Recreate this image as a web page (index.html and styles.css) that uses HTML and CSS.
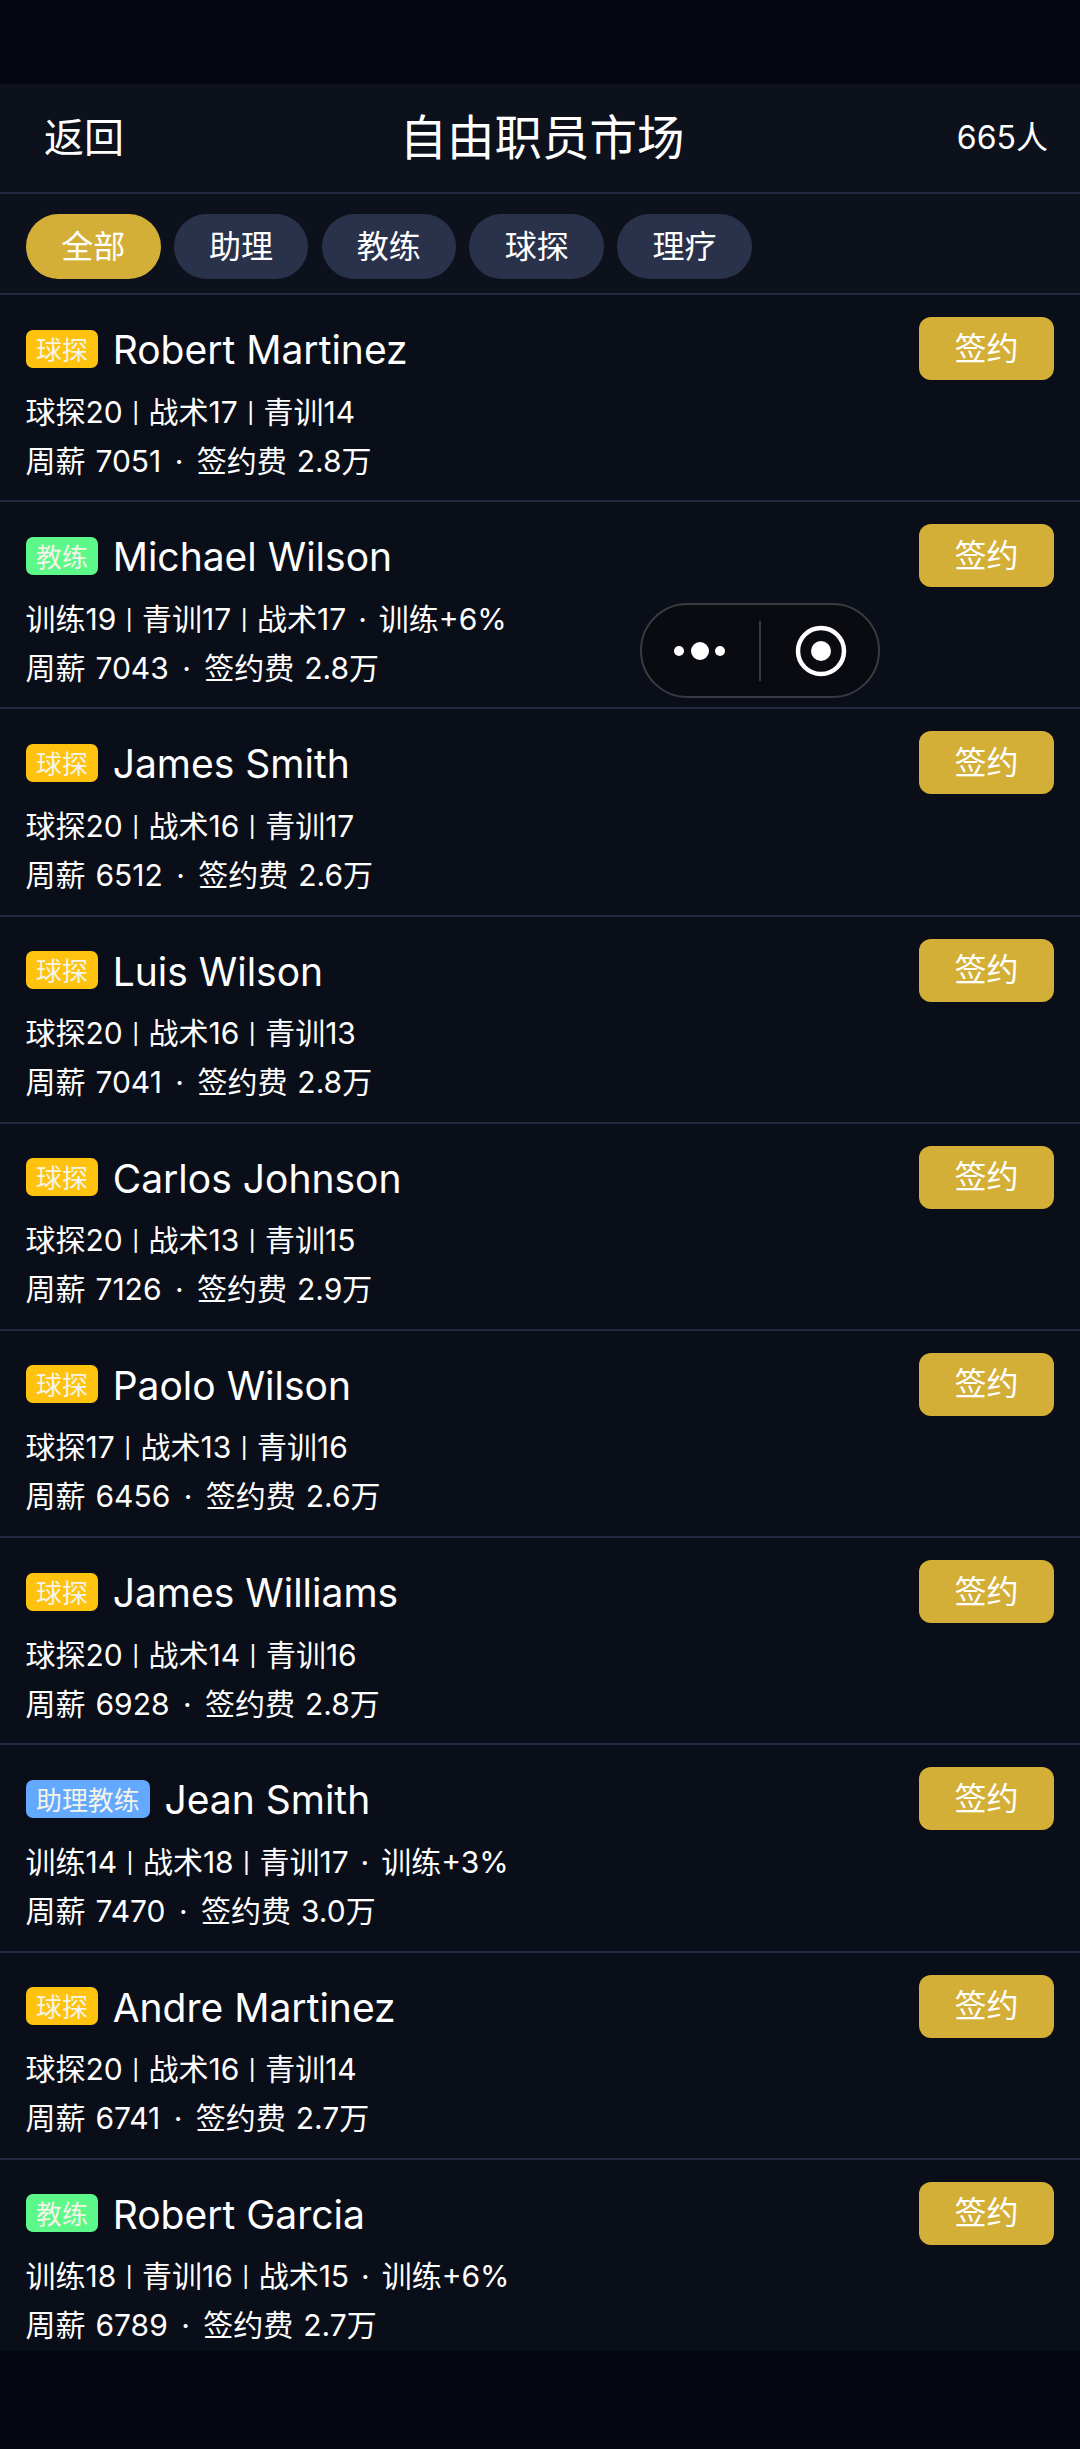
FILE: index.html
```html
<!DOCTYPE html>
<html lang="zh-CN">
<head>
<meta charset="utf-8">
<title>自由职员市场</title>
<link rel="stylesheet" href="styles.css">
</head>
<body>
<div class="status"></div>
<header class="topbar">
  <span class="back">返回</span>
  <h1 class="title">自由职员市场</h1>
  <span class="count">665人</span>
</header>
<nav class="filters">
  <span class="chip chip-on">全部</span>
  <span class="chip">助理</span>
  <span class="chip">教练</span>
  <span class="chip">球探</span>
  <span class="chip">理疗</span>
</nav>
<main class="list">
  <article class="item"><div class="info"><div class="head"><span class="tag scout">球探</span><span class="name">Robert Martinez</span></div><p class="line">球探20 <span class="pipe">|</span> 战术17 <span class="pipe">|</span> 青训14</p><p class="line fee">周薪 7051 <span class="dot">·</span> 签约费 2.8万</p></div><span class="sign">签约</span></article>
  <article class="item"><div class="info"><div class="head"><span class="tag coach">教练</span><span class="name">Michael Wilson</span></div><p class="line">训练19 <span class="pipe">|</span> 青训17 <span class="pipe">|</span> 战术17 <span class="dot">·</span> 训练+6%</p><p class="line fee">周薪 7043 <span class="dot">·</span> 签约费 2.8万</p></div><span class="sign">签约</span></article>
  <article class="item"><div class="info"><div class="head"><span class="tag scout">球探</span><span class="name">James Smith</span></div><p class="line">球探20 <span class="pipe">|</span> 战术16 <span class="pipe">|</span> 青训17</p><p class="line fee">周薪 6512 <span class="dot">·</span> 签约费 2.6万</p></div><span class="sign">签约</span></article>
  <article class="item"><div class="info"><div class="head"><span class="tag scout">球探</span><span class="name">Luis Wilson</span></div><p class="line">球探20 <span class="pipe">|</span> 战术16 <span class="pipe">|</span> 青训13</p><p class="line fee">周薪 7041 <span class="dot">·</span> 签约费 2.8万</p></div><span class="sign">签约</span></article>
  <article class="item"><div class="info"><div class="head"><span class="tag scout">球探</span><span class="name">Carlos Johnson</span></div><p class="line">球探20 <span class="pipe">|</span> 战术13 <span class="pipe">|</span> 青训15</p><p class="line fee">周薪 7126 <span class="dot">·</span> 签约费 2.9万</p></div><span class="sign">签约</span></article>
  <article class="item"><div class="info"><div class="head"><span class="tag scout">球探</span><span class="name">Paolo Wilson</span></div><p class="line">球探17 <span class="pipe">|</span> 战术13 <span class="pipe">|</span> 青训16</p><p class="line fee">周薪 6456 <span class="dot">·</span> 签约费 2.6万</p></div><span class="sign">签约</span></article>
  <article class="item"><div class="info"><div class="head"><span class="tag scout">球探</span><span class="name">James Williams</span></div><p class="line">球探20 <span class="pipe">|</span> 战术14 <span class="pipe">|</span> 青训16</p><p class="line fee">周薪 6928 <span class="dot">·</span> 签约费 2.8万</p></div><span class="sign">签约</span></article>
  <article class="item"><div class="info"><div class="head"><span class="tag assist">助理教练</span><span class="name">Jean Smith</span></div><p class="line">训练14 <span class="pipe">|</span> 战术18 <span class="pipe">|</span> 青训17 <span class="dot">·</span> 训练+3%</p><p class="line fee">周薪 7470 <span class="dot">·</span> 签约费 3.0万</p></div><span class="sign">签约</span></article>
  <article class="item"><div class="info"><div class="head"><span class="tag scout">球探</span><span class="name">Andre Martinez</span></div><p class="line">球探20 <span class="pipe">|</span> 战术16 <span class="pipe">|</span> 青训14</p><p class="line fee">周薪 6741 <span class="dot">·</span> 签约费 2.7万</p></div><span class="sign">签约</span></article>
  <article class="item"><div class="info"><div class="head"><span class="tag coach">教练</span><span class="name">Robert Garcia</span></div><p class="line">训练18 <span class="pipe">|</span> 青训16 <span class="pipe">|</span> 战术15 <span class="dot">·</span> 训练+6%</p><p class="line fee">周薪 6789 <span class="dot">·</span> 签约费 2.7万</p></div><span class="sign">签约</span></article>
</main>
<div class="capsule">
  <svg class="capsule-art" width="240" height="95" viewBox="0 0 240 95" aria-hidden="true">
    <circle cx="39" cy="48" r="5" fill="#fff"/>
    <circle cx="60" cy="48" r="9" fill="#fff"/>
    <circle cx="80" cy="48" r="5" fill="#fff"/>
    <rect x="119" y="18" width="2" height="60" fill="#3a3b42"/>
    <circle cx="181" cy="48" r="23" fill="none" stroke="#fff" stroke-width="4.5"/>
    <circle cx="181" cy="48" r="10" fill="#fff"/>
  </svg>
</div>
</body>
</html>
```
FILE: styles.css
```css
* { box-sizing: border-box; }
html, body { margin: 0; padding: 0; }
body {
  position: relative;
  width: 1080px;
  height: 2449px;
  overflow: hidden;
  background: #040710;
  color: #fff;
  font-family: "Inter", "Noto Sans CJK SC", sans-serif;
}
.status { height: 84px; }
.topbar {
  display: grid;
  grid-template-columns: 1fr auto 1fr;
  align-items: center;
  height: 110px;
  padding: 0 32px 0 36px;
  background: #0c111c;
  border-bottom: 2px solid #232a40;
}
.back { padding-left: 8px; font-size: 40px; line-height: 1; }
.title { margin: 0; font-size: 47.5px; font-weight: 400; line-height: 1; }
.count { justify-self: end; font-size: 32px; line-height: 1; }
.filters {
  display: flex;
  gap: 13.2px;
  align-items: flex-start;
  height: 101px;
  padding: 20px 26px 0;
  background: #0c111c;
  border-bottom: 2px solid #232a40;
}
.chip {
  display: flex;
  align-items: center;
  justify-content: center;
  width: 134.6px;
  height: 65px;
  padding-bottom: 5px;
  border-radius: 32.5px;
  background: #2a314a;
  font-size: 32px;
}
.chip-on { background: #d4af37; }
.list {
  height: 2056px;
  overflow: hidden;
  background: #0a0e18;
}
.item {
  display: flex;
  justify-content: space-between;
  align-items: flex-start;
  height: 207.2px;
  padding: 22px 26px 0 25.5px;
  border-bottom: 2px solid #232a40;
}
.item:last-child { border-bottom: 0; }
.info { min-width: 0; }
.head { display: flex; align-items: center; gap: 14.4px; height: 63px; margin-bottom: 7.5px; }
.tag {
  padding: 0 10.5px;
  height: 38px;
  line-height: 41px;
  border-radius: 7px;
  font-size: 25.9px;
  color: #f4f4e8;
}
.scout { background: #ffc30f; }
.coach { background: #5cf98a; }
.assist { background: #62a9ff; }
.name { padding-top: 2px; font-size: 39px; line-height: 1; }
.line { margin: 0; font-size: 30px; line-height: 48px; }
.fee { word-spacing: 1.5px; }
.pipe { margin: 0 1px; font-size: 20px; font-weight: 500; vertical-align: 3px; }
.dot { margin: 0 3.5px; }
.sign {
  display: flex;
  align-items: center;
  justify-content: center;
  width: 135px;
  height: 63px;
  padding-bottom: 6px;
  border-radius: 12px;
  background: #d4af37;
  font-size: 32px;
}
.capsule {
  position: absolute;
  left: 640px;
  top: 603px;
  width: 240px;
  height: 95px;
  border: 2px solid #3a3b42;
  border-radius: 48px;
  background: #0a0b10;
}
.capsule-art { position: absolute; left: -2px; top: -2px; display: block; }
```
